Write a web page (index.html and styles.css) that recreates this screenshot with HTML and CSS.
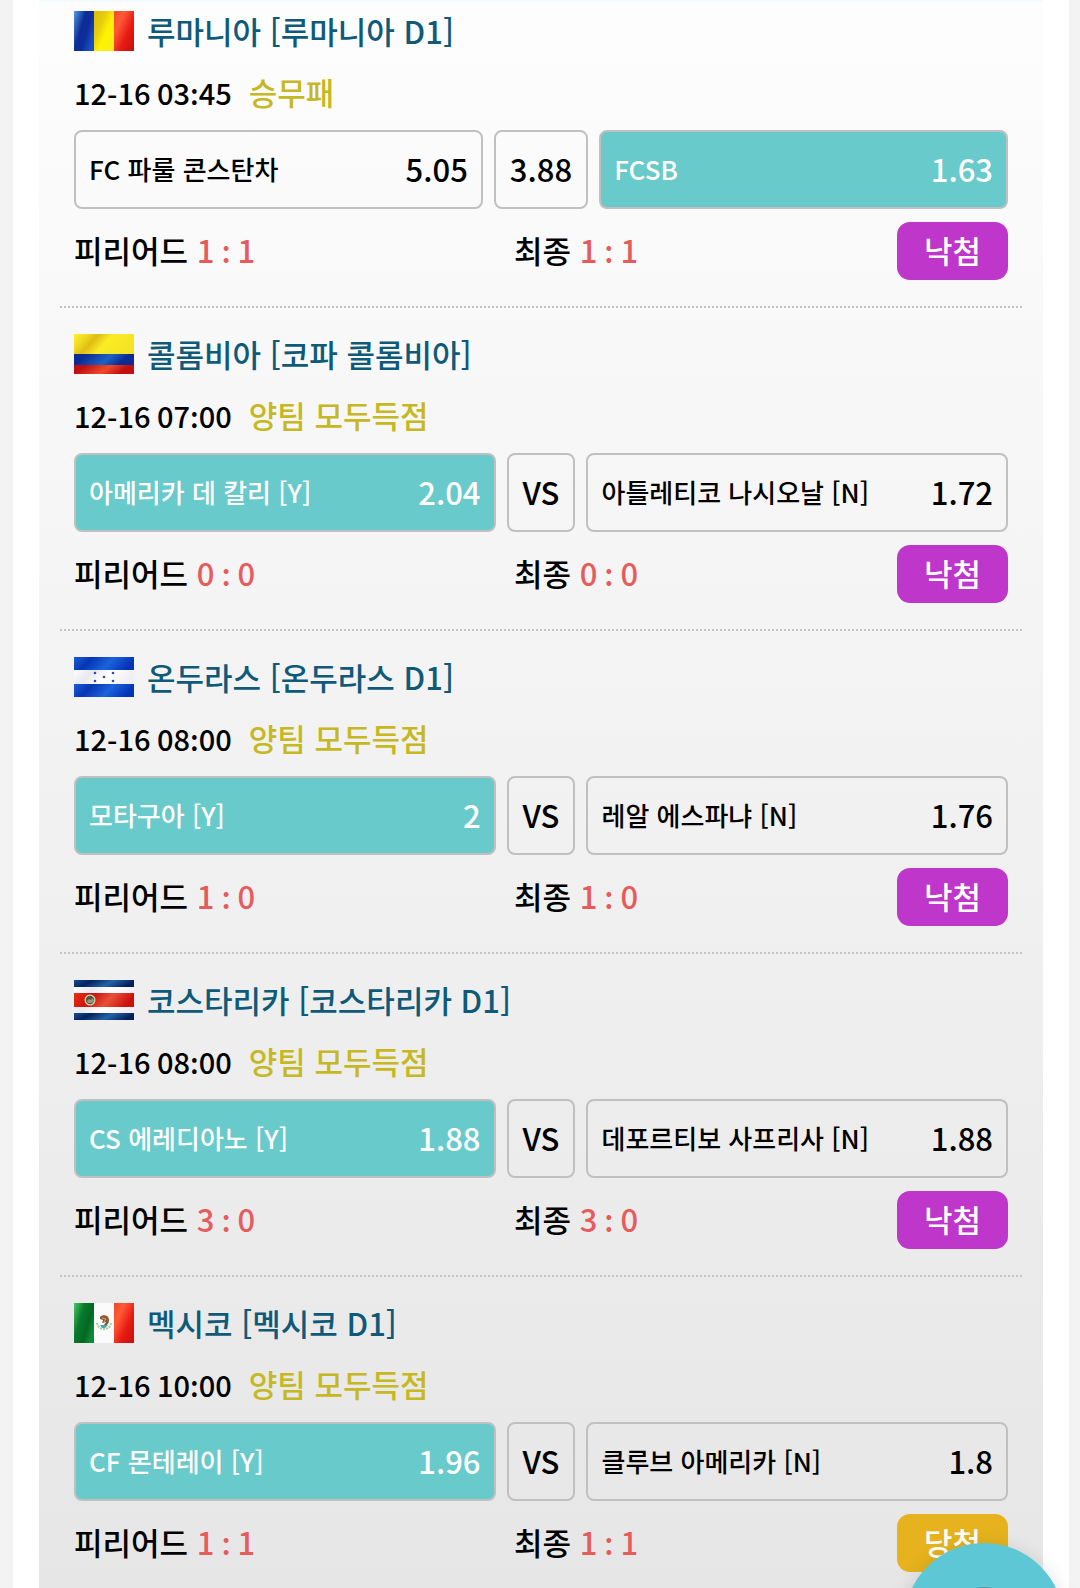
FILE: index.html
```html
<!DOCTYPE html>
<html lang="ko">

<head>
  <meta charset="UTF-8" />
  <meta name="viewport" content="width=device-width, initial-scale=1.0" />
  <title>베팅내역</title>
  <link rel="stylesheet" href="styles.css">
</head>

<body>
  <!-- 국기 광택 -->
  <svg class="defs" aria-hidden="true">
    <defs>
      <linearGradient id="blueBand" x1="0" y1="0" x2="1" y2="0.2">
        <stop offset="0" stop-color="#1c5cd8" />
        <stop offset="0.3" stop-color="#0636b4" />
        <stop offset="0.65" stop-color="#1c62dc" />
        <stop offset="1" stop-color="#0534b8" />
      </linearGradient>
      <linearGradient id="navyBand" x1="0" y1="0" x2="1" y2="0.2">
        <stop offset="0" stop-color="#1a4c98" />
        <stop offset="0.3" stop-color="#04225e" />
        <stop offset="0.65" stop-color="#2462a8" />
        <stop offset="1" stop-color="#04205c" />
      </linearGradient>
      <linearGradient id="crRed" x1="0" y1="0" x2="1" y2="0.2">
        <stop offset="0" stop-color="#e43018" />
        <stop offset="0.35" stop-color="#cc140c" />
        <stop offset="0.65" stop-color="#e85038" />
        <stop offset="1" stop-color="#cc100c" />
      </linearGradient>
      <linearGradient id="whiteBand" x1="0" y1="0" x2="1" y2="0.2">
        <stop offset="0" stop-color="#fff" />
        <stop offset="0.3" stop-color="#e8e8ee" />
        <stop offset="0.6" stop-color="#fff" />
        <stop offset="1" stop-color="#f0f0f4" />
      </linearGradient>
      <linearGradient id="coYellow" x1="0" y1="0" x2="1" y2="0.3">
        <stop offset="0" stop-color="#fff030" />
        <stop offset="0.2" stop-color="#f4dc20" />
        <stop offset="0.38" stop-color="#e0bc14" />
        <stop offset="0.6" stop-color="#faec24" />
        <stop offset="1" stop-color="#f4e424" />
      </linearGradient>
      <linearGradient id="coBlue" x1="0" y1="0" x2="1" y2="0.2">
        <stop offset="0.2" stop-color="#0c2b94" />
        <stop offset="0.62" stop-color="#1c63c4" />
        <stop offset="0.9" stop-color="#0c2b94" />
      </linearGradient>
      <linearGradient id="coRed" x1="0" y1="0" x2="1" y2="0.2">
        <stop offset="0.2" stop-color="#c01010" />
        <stop offset="0.6" stop-color="#ee4c2a" />
        <stop offset="0.9" stop-color="#c01010" />
      </linearGradient>
      <linearGradient id="roBlue" x1="0" y1="0" x2="1" y2="0.6">
        <stop offset="0" stop-color="#4f9bea" />
        <stop offset="0.45" stop-color="#102c94" />
        <stop offset="0.7" stop-color="#0c2e9c" />
        <stop offset="1" stop-color="#1c4fc0" />
      </linearGradient>
      <linearGradient id="roYellow" x1="0" y1="0" x2="1" y2="0.9">
        <stop offset="0" stop-color="#d8bd00" />
        <stop offset="0.35" stop-color="#e8cc10" />
        <stop offset="0.6" stop-color="#fff200" />
        <stop offset="1" stop-color="#f8ec20" />
      </linearGradient>
      <linearGradient id="redBand" x1="0" y1="0" x2="1" y2="0.9">
        <stop offset="0" stop-color="#f04a28" />
        <stop offset="0.3" stop-color="#ff5a36" />
        <stop offset="0.65" stop-color="#e81a14" />
        <stop offset="1" stop-color="#c81010" />
      </linearGradient>
      <linearGradient id="mxGreen" x1="0" y1="0" x2="1" y2="0.6">
        <stop offset="0" stop-color="#4cc868" />
        <stop offset="0.4" stop-color="#087a2c" />
        <stop offset="0.75" stop-color="#046820" />
        <stop offset="1" stop-color="#108838" />
      </linearGradient>
    </defs>
  </svg>

  <main class="wrap">
    <div class="bet-list">

      <section class="bet">
        <h2 class="league">
          <svg class="flag" viewBox="0 0 60 40" role="img" aria-label="루마니아">
            <rect width="20" height="40" fill="url(#roBlue)" />
            <rect x="20" width="20" height="40" fill="url(#roYellow)" />
            <rect x="40" width="20" height="40" fill="url(#redBand)" />
          </svg>
          루마니아 [루마니아 D1]
        </h2>
        <p class="info"><time lang="en">12-16 03:45</time><span class="type">승무패</span></p>
        <div class="odds">
          <button class="team"><span>FC 파룰 콘스탄차</span><b>5.05</b></button>
          <button class="draw">3.88</button>
          <button class="team on"><span>FCSB</span><b>1.63</b></button>
        </div>
        <div class="result">
          <p>피리어드 <em lang="en">1 : 1</em></p>
          <p>최종 <em lang="en">1 : 1</em></p>
          <span class="badge lose">낙첨</span>
        </div>
      </section>

      <section class="bet">
        <h2 class="league">
          <svg class="flag" viewBox="0 0 60 40" role="img" aria-label="콜롬비아">
            <rect width="60" height="20" fill="url(#coYellow)" />
            <rect y="20" width="60" height="11" fill="url(#coBlue)" />
            <rect y="31" width="60" height="9" fill="url(#coRed)" />
          </svg>
          콜롬비아 [코파 콜롬비아]
        </h2>
        <p class="info"><time lang="en">12-16 07:00</time><span class="type">양팀 모두득점</span></p>
        <div class="odds">
          <button class="team on"><span>아메리카 데 칼리 [Y]</span><b>2.04</b></button>
          <button class="draw">VS</button>
          <button class="team"><span>아틀레티코 나시오날 [N]</span><b>1.72</b></button>
        </div>
        <div class="result">
          <p>피리어드 <em lang="en">0 : 0</em></p>
          <p>최종 <em lang="en">0 : 0</em></p>
          <span class="badge lose">낙첨</span>
        </div>
      </section>

      <section class="bet">
        <h2 class="league">
          <svg class="flag" viewBox="0 0 60 40" role="img" aria-label="온두라스">
            <rect width="60" height="13" fill="url(#blueBand)" />
            <rect y="13" width="60" height="14" fill="url(#whiteBand)" />
            <rect y="27" width="60" height="13" fill="url(#blueBand)" />
            <g fill="#2a4fa8">
              <circle cx="21" cy="16" r="1.3" />
              <circle cx="39" cy="16" r="1.3" />
              <circle cx="30" cy="20" r="1.3" />
              <circle cx="21" cy="24" r="1.3" />
              <circle cx="39" cy="24" r="1.3" />
            </g>
          </svg>
          온두라스 [온두라스 D1]
        </h2>
        <p class="info"><time lang="en">12-16 08:00</time><span class="type">양팀 모두득점</span></p>
        <div class="odds">
          <button class="team on"><span>모타구아 [Y]</span><b>2</b></button>
          <button class="draw">VS</button>
          <button class="team"><span>레알 에스파냐 [N]</span><b>1.76</b></button>
        </div>
        <div class="result">
          <p>피리어드 <em lang="en">1 : 0</em></p>
          <p>최종 <em lang="en">1 : 0</em></p>
          <span class="badge lose">낙첨</span>
        </div>
      </section>

      <section class="bet">
        <h2 class="league">
          <svg class="flag" viewBox="0 0 60 40" role="img" aria-label="코스타리카">
            <rect width="60" height="7" fill="url(#navyBand)" />
            <rect y="7" width="60" height="26" fill="url(#whiteBand)" />
            <rect y="13" width="60" height="14" fill="url(#crRed)" />
            <rect y="33" width="60" height="7" fill="url(#navyBand)" />
            <circle cx="16" cy="20" r="5.5" fill="#d8cdb4" />
            <circle cx="16" cy="20" r="4.2" fill="#4c5a44" />
            <path d="M13 21l2-2 2 1 2-2 1 3-2 2h-4z" fill="#8f9a78" />
          </svg>
          코스타리카 [코스타리카 D1]
        </h2>
        <p class="info"><time lang="en">12-16 08:00</time><span class="type">양팀 모두득점</span></p>
        <div class="odds">
          <button class="team on"><span>CS 에레디아노 [Y]</span><b>1.88</b></button>
          <button class="draw">VS</button>
          <button class="team"><span>데포르티보 사프리사 [N]</span><b>1.88</b></button>
        </div>
        <div class="result">
          <p>피리어드 <em lang="en">3 : 0</em></p>
          <p>최종 <em lang="en">3 : 0</em></p>
          <span class="badge lose">낙첨</span>
        </div>
      </section>

      <section class="bet">
        <h2 class="league">
          <svg class="flag" viewBox="0 0 60 40" role="img" aria-label="멕시코">
            <rect width="20" height="40" fill="url(#mxGreen)" />
            <rect x="20" width="20" height="40" fill="#fbfbfb" />
            <rect x="40" width="20" height="40" fill="url(#redBand)" />
            <path d="M23 20c1 8 13 8 14 0" fill="none" stroke="#a8c8a0" stroke-width="2" stroke-dasharray="2 1" />
            <path d="M26 22h8l-3 3h-3z" fill="#4aa8b0" />
            <path d="M26 14c3-3 9-2 9 3 0 4-2 6-5 5l2-3-4 1 1-3-3-1z" fill="#8a5a34" />
            <path d="M28 15l4 1-2 3" fill="none" stroke="#d8a878" />
          </svg>
          멕시코 [멕시코 D1]
        </h2>
        <p class="info"><time lang="en">12-16 10:00</time><span class="type">양팀 모두득점</span></p>
        <div class="odds">
          <button class="team on"><span>CF 몬테레이 [Y]</span><b>1.96</b></button>
          <button class="draw">VS</button>
          <button class="team"><span>클루브 아메리카 [N]</span><b>1.8</b></button>
        </div>
        <div class="result">
          <p>피리어드 <em lang="en">1 : 1</em></p>
          <p>최종 <em lang="en">1 : 1</em></p>
          <span class="badge win">당첨</span>
        </div>
      </section>

    </div>
  </main>

  <button class="floating" aria-label="메뉴">
    <svg viewBox="0 0 160 160" aria-hidden="true">
      <path d="M48 80c0-48 64-48 64 0v28H48z" fill="#5f8f98" />
    </svg>
  </button>
</body>

</html>
```
FILE: styles.css
```css
* {
  box-sizing: border-box;
}

body {
  margin: 0;
  background-color: #f3f3f3;
  color: #000;
  font-family: "Noto Sans CJK KR", sans-serif;
  font-size: 31px;
  font-weight: 500;
}

h2,
p {
  margin: 0;
}

.defs {
  position: absolute;
  width: 0;
  height: 0;
}

.wrap {
  min-height: 100vh;
  margin: 0 11px 0 13px;
  padding: 0 26px;
  background-color: #fff;
}

.bet-list {
  min-height: 100vh;
  padding: 0 21px;
  background: linear-gradient(#fdfdfd, #e6e6e6);
  box-shadow: inset 0 2px #f2fcfd;
}

.bet {
  padding: 22px 14px 26px;
  border-bottom: 2px dotted #c4c4c4;
}

.bet:first-child {
  padding-top: 7px;
}

.bet:last-child {
  padding-bottom: 0;
  border-bottom: none;
}

.league {
  display: flex;
  align-items: center;
  gap: 13px;
  margin-bottom: 13px;
  color: #0f5a78;
  font-size: 31px;
  font-weight: 500;
  line-height: 48px;
}

.flag {
  width: 60px;
  height: 40px;
}

.info {
  display: flex;
  align-items: center;
  gap: 17px;
  margin-bottom: 14px;
  line-height: 48px;
}

/* 숫자 사이 콜론 위치 */
.info time,
.result em {
  font-family: "Noto Sans CJK JP", sans-serif;
}

.info time {
  font-size: 29px;
}

.type {
  color: #c6b822;
}

.odds {
  display: flex;
  gap: 11px;
  margin-bottom: 13px;
}

.odds button {
  height: 79px;
  padding: 0 13px 2px;
  border: 2px solid #c0c0c0;
  border-radius: 8px;
  background: none;
  color: #000;
  font-family: inherit;
  font-size: 31px;
  font-weight: 500;
  cursor: pointer;
}

.odds .draw {
  padding: 0 14px 2px;
}

.odds .team {
  flex: 1;
  display: flex;
  justify-content: space-between;
  align-items: center;
}

.team span {
  font-size: 26px;
}

.team b {
  font-weight: 500;
}

.odds .on {
  background-color: #68caca;
  color: #fff;
}

.result {
  display: flex;
  justify-content: space-between;
  align-items: flex-start;
  line-height: 56px;
}

.result em {
  color: #e65c5c;
  font-style: normal;
}

.badge {
  padding: 0 27px 2px;
  border-radius: 13px;
  color: #fff;
}

.lose {
  background-color: #be36ca;
}

.win {
  background-color: #e6b31e;
}

.floating {
  position: fixed;
  right: 16px;
  bottom: -115px;
  width: 160px;
  height: 160px;
  padding: 0;
  border: none;
  border-radius: 50%;
  background-color: #5dc7d6;
  box-shadow: 0 4px 20px rgba(0, 0, 0, 0.15);
  cursor: pointer;
}

.floating svg {
  display: block;
  width: 100%;
}
```
